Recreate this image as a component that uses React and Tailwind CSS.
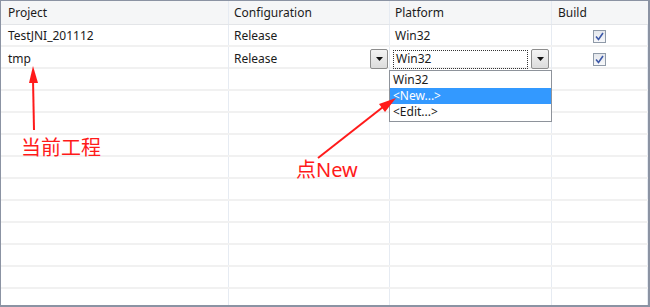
import React from 'react';

const font = { fontFamily: '"Noto Sans", "Noto Sans CJK SC", sans-serif' };

// combo arrow button used inside edit rows
function ComboButton() {
  return (
    <div className="w-[18px] h-[20px] border border-[#8c8c8c] rounded-[2px] bg-gradient-to-b from-[#f4f4f4] to-[#dcdcdc] flex items-center justify-center">
      <svg width="7" height="4" viewBox="0 0 7 4">
        <path d="M0 0 L7 0 L3.5 4 Z" fill="#111" />
      </svg>
    </div>
  );
}

function Check() {
  return (
    <div className="w-[13px] h-[13px] border border-[#8f9aa8] bg-gradient-to-b from-[#e4e7ec] to-[#f7f8fa] flex items-center justify-center">
      <svg width="9" height="9" viewBox="0 0 9 9">
        <path d="M1 4.5 L3.5 7.5 L8 1" stroke="#3c58a8" strokeWidth="1.6" fill="none" />
      </svg>
    </div>
  );
}

const cols = 'grid grid-cols-[228px_161px_162px_1fr]';
const cell = 'border-r border-[#e6ebf2] flex items-center';

function Row({ children }) {
  return (
    <div className={`${cols} h-[22px] border-b-2 border-[#f1f1f1]`}>
      {children}
    </div>
  );
}

export default function App() {
  const emptyRows = Array.from({ length: 11 });

  return (
    <div className="relative w-[650px] h-[307px] bg-white overflow-hidden border-l border-t border-r-2 border-b-2 border-[#8b93a3] text-[12px] text-[#1b1b1b]" style={font}>
      {/* header */}
      <div className={`${cols} h-[24px] bg-[#f5f6f7] border-b border-[#e3e5e8]`}>
        <div className={`${cell} pl-[7px] border-[#e2e4e7]`}>Project</div>
        <div className={`${cell} pl-[5px] border-[#e2e4e7]`}>Configuration</div>
        <div className={`${cell} pl-[5px] border-[#e2e4e7]`}>Platform</div>
        <div className="flex items-center pl-[6px]">Build</div>
      </div>

      <Row>
        <div className={`${cell} pl-[7px] pt-[2px]`}>TestJNI_201112</div>
        <div className={`${cell} pl-[5px] pt-[2px]`}>Release</div>
        <div className={`${cell} pl-[5px] pt-[2px]`}>Win32</div>
        <div className="flex items-center justify-center border-r border-[#e6ebf2] pt-[2px]"><Check /></div>
      </Row>

      <Row>
        <div className={`${cell} pl-[7px] pt-[2px]`}>tmp</div>
        <div className={`${cell} pl-[5px] justify-between pr-[1px] pt-[2px]`}>
          <span>Release</span>
          <ComboButton />
        </div>
        <div className={`${cell} pl-[3px] pr-[2px] gap-[3px] pt-[2px]`}>
          <div className="flex-1 h-[19px] border border-dotted border-[#333] flex items-center pl-[2px]">Win32</div>
          <ComboButton />
        </div>
        <div className="flex items-center justify-center border-r border-[#e6ebf2] pt-[2px]"><Check /></div>
      </Row>

      {emptyRows.map((_, i) => (
        <Row key={i}>
          <div className={cell} />
          <div className={cell} />
          <div className={cell} />
          <div className="border-r border-[#e6ebf2]" />
        </Row>
      ))}

      {/* open platform dropdown */}
      <div className="absolute left-[388px] top-[69px] w-[163px] bg-white border border-[#8e939b] py-px">
        <div className="h-[16px] flex items-center pl-[3px]">Win32</div>
        <div className="h-[16px] flex items-center pl-[3px] bg-[#3399ff] text-white">&lt;New...&gt;</div>
        <div className="h-[16px] flex items-center pl-[3px]">&lt;Edit...&gt;</div>
      </div>

      {/* annotations */}
      <svg className="absolute left-0 top-0" width="650" height="307">
        <line x1="33" y1="129" x2="32" y2="78" stroke="#ff1a1a" strokeWidth="2" />
        <path d="M32 65 L37 82 L28 82 Z" fill="#ff1a1a" />
        <line x1="317" y1="157" x2="382" y2="106" stroke="#ff1a1a" strokeWidth="2" />
        <path d="M395 97 L384 111 L378 103 Z" fill="#ff1a1a" />
      </svg>
      <div className="absolute left-[20px] top-[136px] text-[20px] text-[#ff1a1a] leading-none" style={{ fontFamily: '"Noto Sans CJK SC", sans-serif' }}>当前工程</div>
      <div className="absolute left-[295px] top-[159px] text-[20px] text-[#ff1a1a] leading-none" style={{ fontFamily: '"Noto Sans", "Noto Sans CJK SC", sans-serif' }}>点New</div>
    </div>
  );
}
